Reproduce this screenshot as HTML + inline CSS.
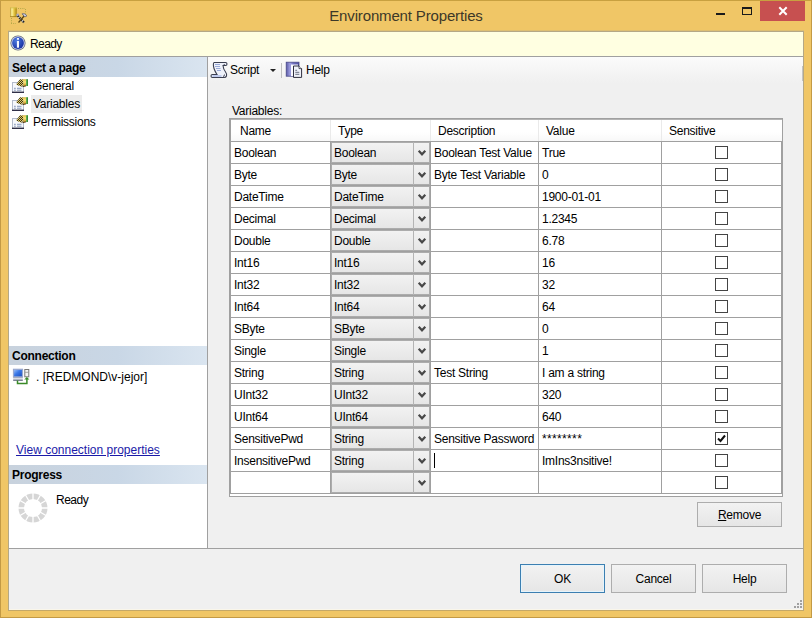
<!DOCTYPE html>
<html><head><meta charset="utf-8">
<style>
*{margin:0;padding:0;box-sizing:border-box}
html,body{width:812px;height:618px;overflow:hidden}
body{position:relative;background:#F0C666;font-family:"Liberation Sans",sans-serif;font-size:12px;color:#000}
.a{position:absolute}
.t{position:absolute;white-space:nowrap;line-height:14px;font-size:12px;letter-spacing:-0.25px}
.b{font-weight:bold}
#frame{left:0;top:0;width:812px;height:618px;border:1px solid #C39A45;border-top-color:#C8A040}
#title{left:0;width:812px;top:7px;text-align:center;font-size:15px;line-height:18px;color:#3d3828;letter-spacing:-0.15px}
#client{left:8px;top:31px;width:796px;height:580px;border:1px solid #B4A886;border-bottom-color:#C4A868;background:#F0F0F0}
#info{left:9px;top:32px;width:794px;height:25px;background:#FFFFE1;border-bottom:1px solid #A0A0A0}
#leftp{left:9px;top:57px;width:199px;height:492px;background:#fff;border-right:1px solid #A0A0A0;border-bottom:1px solid #A0A0A0}
#rightp{left:208px;top:57px;width:595px;height:492px;background:#F0F0F0;border-bottom:1px solid #A0A0A0}
#tb{left:208px;top:57px;width:595px;height:26px;background:linear-gradient(#FBFBFB,#F0F0F0)}
.hdr{position:absolute;left:9px;width:198px;height:19px;background:linear-gradient(to right,#C8D2DD,#C9D7E6 55%,#DAE5F0)}
#grid{left:229px;top:118px;width:554px;height:379px;border:1px solid #A0A0A0;background:#fff}
.hl{position:absolute;height:1px;background:#A0A0A0}
.vl{position:absolute;width:1px;background:#A0A0A0}
.cb{position:absolute;width:13px;height:13px;border:1px solid #444;background:#fff}
.combo{position:absolute;left:331px;width:99px;height:21px;border:1px solid #ACACAC;background:linear-gradient(#F2F2F2,#E6E6E6)}
.dd{position:absolute;left:413px;width:1px;height:21px;background:#B4B4B4}
.btn{position:absolute;border:1px solid #ADADAD;background:linear-gradient(#F2F2F2,#E6E6E6);text-align:center}
</style></head><body>
<div id="frame" class="a"></div>
<!-- title icon -->
<svg class="a" style="left:8px;top:4px" width="20" height="20" viewBox="0 0 20 20">
  <defs><linearGradient id="cy" x1="0" x2="1"><stop offset="0" stop-color="#B89830"/><stop offset="0.25" stop-color="#FFF4A0"/><stop offset="0.6" stop-color="#E4C440"/><stop offset="1" stop-color="#A88614"/></linearGradient></defs>
  <path d="M2.2 3.5h6.6v9.5h-6.6z" fill="url(#cy)"/>
  <path d="M2.2 3.8h6.6" stroke="#D8C050" stroke-width="1"/>
  <path d="M2.2 12.6h6.6" stroke="#9A7A18" stroke-width="0.8"/>
  <path d="M10 4.5h7M17.5 5v5M3.5 14v5M3 19.5h5" stroke="#B4A848" stroke-width="1" stroke-dasharray="1 1.2"/>
  <path d="M9 11 L16 18.5" stroke="#222" stroke-width="2"/>
  <path d="M9 11 L16 18.5" stroke="#E8E8E8" stroke-width="2" stroke-dasharray="1 1.5"/>
  <path d="M17 11 L10.5 18.5" stroke="#5a4410" stroke-width="1.3"/>
  <path d="M14 9.8 q3 -1 5 2 l-2.2 1.2z" fill="#C8CCE0" stroke="#556" stroke-width="0.7"/>
  <path d="M8.2 10.6 q1.2 -1.8 3.2 -0.4 l-1.6 2z" fill="#A8A8C0"/>
</svg>
<div id="title" class="a">Environment Properties</div>
<!-- min max close -->
<div class="a" style="left:716px;top:13px;width:9px;height:2px;background:#1a1a1a"></div>
<div class="a" style="left:742px;top:7px;width:10px;height:8px;border:1px solid #1a1a1a;border-top-width:2px"></div>
<div class="a" style="left:760px;top:1px;width:45px;height:20px;background:#C75050"></div>
<svg class="a" style="left:778px;top:6px" width="10" height="10" viewBox="0 0 10 10"><path d="M1.3 1.3L8.7 8.7M8.7 1.3L1.3 8.7" stroke="#fff" stroke-width="2"/></svg>

<div class="a" style="left:8px;top:30px;width:796px;height:1px;background:#DDBE72"></div>
<div id="client" class="a"></div>
<div class="a" style="left:9px;top:609px;width:794px;height:1px;background:#FAF6EA"></div>
<div id="info" class="a"></div>
<svg class="a" style="left:10px;top:35px" width="16" height="16" viewBox="0 0 16 16">
  <defs><radialGradient id="ig" cx="0.35" cy="0.3" r="0.75"><stop offset="0" stop-color="#4A78E0"/><stop offset="1" stop-color="#1A32A0"/></radialGradient></defs>
  <circle cx="8" cy="8" r="7.6" fill="#646A7A"/>
  <circle cx="8" cy="8" r="6.8" fill="#CDD4F0"/>
  <circle cx="8" cy="8" r="5.9" fill="url(#ig)"/>
  <rect x="6.9" y="3" width="2.1" height="1.8" fill="#E8F4FF"/>
  <rect x="6.9" y="5.9" width="2.1" height="6.8" fill="#F4F6FF"/>
</svg>
<div class="t" style="left:30px;top:37px;letter-spacing:-0.6px">Ready</div>

<div id="leftp" class="a"></div>
<div id="rightp" class="a"></div>
<div id="tb" class="a"></div>
<div class="a" style="left:802px;top:66px;width:1px;height:15px;background:#C4C4C4"></div>

<!-- left panel -->
<div class="hdr" style="top:57px;height:20px"></div>
<div class="t b" style="left:12px;top:61px">Select a page</div>
<div class="a" style="left:31px;top:95px;width:51px;height:18px;background:#ECECEC"></div>
<div class="t" style="left:33px;top:79px">General</div>
<div class="t" style="left:33px;top:97px">Variables</div>
<div class="t" style="left:33px;top:115px">Permissions</div>

<div class="hdr" style="top:346px"></div>
<div class="t b" style="left:12px;top:349px">Connection</div>
<div class="t" style="left:36px;top:370px;letter-spacing:0">. [REDMOND\v-jejor]</div>
<div class="t" style="left:16px;top:443px;color:#1A1AA8;text-decoration:underline;letter-spacing:0">View connection properties</div>

<div class="hdr" style="top:465px"></div>
<div class="t b" style="left:12px;top:468px">Progress</div>
<div class="t" style="left:56px;top:493px;letter-spacing:-0.5px">Ready</div>


<!-- page icons -->
<svg class="a" style="left:11px;top:78px" width="18" height="16" viewBox="0 0 18 16" id="pgicon">
  <defs>
   <linearGradient id="pen" x1="0" y1="0" x2="0" y2="1"><stop offset="0" stop-color="#D8B840"/><stop offset="0.4" stop-color="#FCE680"/><stop offset="1" stop-color="#C89010"/></linearGradient>
   <linearGradient id="grn" x1="0" y1="0" x2="1" y2="0"><stop offset="0" stop-color="#70C060"/><stop offset="1" stop-color="#287828"/></linearGradient>
   <pattern id="chk" width="2" height="2" patternUnits="userSpaceOnUse"><rect width="2" height="2" fill="#E0C868"/><rect width="1" height="1" fill="#3A3414"/><rect x="1" y="1" width="1" height="1" fill="#3A3414"/></pattern>
  </defs>
  <rect x="1.5" y="4.5" width="11" height="10" fill="#F6F8FC" stroke="#B4BCCC" stroke-width="1"/>
  <path d="M1 14.3h12" stroke="#303048" stroke-width="1.4"/>
  <path d="M3 10.3h1.8M6 10.3h4.5M3 12.2h1.8M6 12.2h4.5" stroke="#8898B8" stroke-width="1"/>
  <path d="M5.1 6.5 L9 1.2 L12 1.4 L12.6 6.6 L10.3 8.8 Z" fill="url(#chk)"/>
  <path d="M11.6 1.3 H15.2 V7.6 L12.2 8.3 Q12.8 4.5 11.6 1.3Z" fill="url(#pen)"/>
  <path d="M11.5 8.6 L15.2 7.8" stroke="#4A3008" stroke-width="1"/>
  <rect x="15" y="1.2" width="2" height="6.8" fill="url(#grn)"/>
</svg>
<svg class="a" style="left:11px;top:96px" width="18" height="16" viewBox="0 0 18 16"><use href="#pgicon"/></svg>
<svg class="a" style="left:11px;top:114px" width="18" height="16" viewBox="0 0 18 16"><use href="#pgicon"/></svg>

<!-- script icon -->
<svg class="a" style="left:210px;top:61px" width="18" height="18" viewBox="0 0 18 18">
  <path d="M4.2 1.5 H15.5 Q17 1.5 17 3 Q17 4.5 15.5 4.5 H13 Q13.3 8 15.3 10.5 Q17 12.8 16.5 15 Q16 16.5 14 16.5 H2.5 Q1 16.5 1 15 Q1 13.5 2.5 13.5 H7 Q5 10.5 4 7.5 Q3.2 5 3.4 3 Q3.6 1.5 4.2 1.5 Z" fill="#EEF1FA" stroke="#3A3E50" stroke-width="1.1"/>
  <path d="M5 3.5h5M5 5.5h5M6 7.5h4.5M7 9.5h4" stroke="#9AAAD8" stroke-width="1"/>
  <path d="M2.5 15h9" stroke="#B4C2EC" stroke-width="1.6"/>
  <path d="M15.5 4.5 Q14 4.5 14 3" fill="none" stroke="#3A3E50" stroke-width="0.9"/>
  <path d="M13 15.5 Q14.5 15.5 14.5 13.5" fill="none" stroke="#3A3E50" stroke-width="0.9"/>
</svg>
<!-- help icon -->
<svg class="a" style="left:285px;top:61px" width="18" height="18" viewBox="0 0 18 18">
  <defs><linearGradient id="bk" x1="0" x2="1"><stop offset="0" stop-color="#5A5AA8"/><stop offset="0.3" stop-color="#A0A0E0"/><stop offset="0.55" stop-color="#7070C0"/><stop offset="1" stop-color="#5050A0"/></linearGradient></defs>
  <rect x="1.2" y="1.2" width="12.8" height="14" fill="url(#bk)" stroke="#4A4A88" stroke-width="0.8"/>
  <rect x="6" y="3.5" width="7" height="11.5" fill="#FAFAFF"/>
  <path d="M8.5 5 H14 L16.6 7.6 V16.4 H8.5 Z" fill="#F0F2FA" stroke="#2E2E3E" stroke-width="1"/>
  <path d="M14 5 V7.6 H16.6" fill="#FFF" stroke="#2E2E3E" stroke-width="0.8"/>
  <path d="M10.3 9.3h1.8M10.3 11.3h4M10.3 13.3h4" stroke="#6A7080" stroke-width="1"/>
</svg>
<!-- connection icon -->
<svg class="a" style="left:12px;top:368px" width="18" height="18" viewBox="0 0 18 18">
  <defs><linearGradient id="scr" x1="0" y1="0" x2="1" y2="1"><stop offset="0" stop-color="#A8C8F8"/><stop offset="0.45" stop-color="#3A78E8"/><stop offset="1" stop-color="#1848B8"/></linearGradient></defs>
  <rect x="1.5" y="1.3" width="9" height="7.6" fill="url(#scr)" stroke="#98A8D0" stroke-width="1.2"/>
  <rect x="1.2" y="9.3" width="9.6" height="3.2" fill="#E0E4EC"/>
  <path d="M1.2 12.2h9.6" stroke="#485068" stroke-width="1"/>
  <path d="M1.2 9.6h9.6" stroke="#8890A8" stroke-width="0.7"/>
  <rect x="12.8" y="1.5" width="4" height="7.3" fill="#F4F4F4" stroke="#787878" stroke-width="1"/>
  <path d="M13 4.3h3.6" stroke="#909090" stroke-width="0.8"/>
  <path d="M5.5 12.6 V15.4 H14.9 V10.6" fill="none" stroke="#3A8A28" stroke-width="1.5"/>
  <path d="M12.2 11.6 L14.9 9 L17.4 11.6 Z" fill="#3A8A28"/>
</svg>
<!-- spinner -->
<svg class="a" style="left:18px;top:493px" width="30" height="30" viewBox="0 0 30 30">
  <circle cx="15" cy="15" r="11.8" fill="none" stroke="#D6D6D6" stroke-width="5.4"/>
  <g stroke="#fff" stroke-width="1.3">
    <path d="M15 0V30M0 15H30"/>
    <path d="M15 15L28 7.5M15 15L2 22.5M15 15L28 22.5M15 15L2 7.5M15 15L7.5 2M15 15L22.5 28M15 15L22.5 2M15 15L7.5 28"/>
  </g>
</svg>

<!-- size grip -->
<div class="a" style="left:800px;top:600px;width:2px;height:2px;background:#A0A0A0"></div>
<div class="a" style="left:797px;top:603px;width:2px;height:2px;background:#A0A0A0"></div>
<div class="a" style="left:800px;top:603px;width:2px;height:2px;background:#A0A0A0"></div>
<div class="a" style="left:794px;top:606px;width:2px;height:2px;background:#A0A0A0"></div>
<div class="a" style="left:797px;top:606px;width:2px;height:2px;background:#A0A0A0"></div>
<div class="a" style="left:800px;top:606px;width:2px;height:2px;background:#A0A0A0"></div>

<!-- toolbar -->
<div class="t" style="left:230px;top:63px">Script</div>
<div class="a" style="left:270px;top:69px;width:0;height:0;border-left:3px solid transparent;border-right:3px solid transparent;border-top:3px solid #222"></div>
<div class="a" style="left:281px;top:63px;width:1px;height:15px;background:#C0C0C0"></div>
<div class="t" style="left:306px;top:63px">Help</div>

<div class="t" style="left:232px;top:104px">Variables:</div>

<!-- grid -->
<div id="grid" class="a"></div>
<div class="a" style="left:230px;top:119px;width:552px;height:22px;background:linear-gradient(#fff,#fff 60%,#F8F8F8)"></div>
<div class="hl" style="left:230px;top:119px;width:552px;background:#B4B4B4"></div>
<div class="a" style="left:330px;top:120px;width:1px;height:21px;background:#EAEAEA"></div>
<div class="a" style="left:430px;top:120px;width:1px;height:21px;background:#EAEAEA"></div>
<div class="a" style="left:538px;top:120px;width:1px;height:21px;background:#EAEAEA"></div>
<div class="a" style="left:661px;top:120px;width:1px;height:21px;background:#EAEAEA"></div>
<div class="hl" style="left:230px;top:141px;width:552px"></div>
<div class="t" style="left:240px;top:124px">Name</div>
<div class="t" style="left:338px;top:124px">Type</div>
<div class="t" style="left:438px;top:124px">Description</div>
<div class="t" style="left:546px;top:124px">Value</div>
<div class="t" style="left:669px;top:124px">Sensitive</div>
<div class="vl" style="left:230px;top:119px;height:375px"></div>
<div class="vl" style="left:781px;top:141px;height:353px"></div>
<div class="hl" style="left:230px;top:163px;width:552px"></div>
<div class="vl" style="left:330px;top:142px;height:21px"></div>
<div class="vl" style="left:430px;top:142px;height:21px"></div>
<div class="vl" style="left:538px;top:142px;height:21px"></div>
<div class="vl" style="left:661px;top:142px;height:21px"></div>
<div class="t" style="left:234px;top:146px">Boolean</div>
<div class="combo" style="top:142px"></div>
<div class="dd" style="top:142px"></div>
<svg class="a" style="left:417px;top:149px" width="10" height="9" viewBox="0 0 10 9"><path d="M1.7 1.8L5 5.3L8.3 1.8" fill="none" stroke="#484848" stroke-width="2.2"/></svg>
<div class="t" style="left:334px;top:146px">Boolean</div>
<div class="t" style="left:434px;top:146px">Boolean Test Value</div>
<div class="t" style="left:542px;top:146px">True</div>
<div class="cb" style="left:715px;top:146px"></div>
<div class="hl" style="left:230px;top:185px;width:552px"></div>
<div class="vl" style="left:330px;top:164px;height:21px"></div>
<div class="vl" style="left:430px;top:164px;height:21px"></div>
<div class="vl" style="left:538px;top:164px;height:21px"></div>
<div class="vl" style="left:661px;top:164px;height:21px"></div>
<div class="t" style="left:234px;top:168px">Byte</div>
<div class="combo" style="top:164px"></div>
<div class="dd" style="top:164px"></div>
<svg class="a" style="left:417px;top:171px" width="10" height="9" viewBox="0 0 10 9"><path d="M1.7 1.8L5 5.3L8.3 1.8" fill="none" stroke="#484848" stroke-width="2.2"/></svg>
<div class="t" style="left:334px;top:168px">Byte</div>
<div class="t" style="left:434px;top:168px">Byte Test Variable</div>
<div class="t" style="left:542px;top:168px">0</div>
<div class="cb" style="left:715px;top:168px"></div>
<div class="hl" style="left:230px;top:207px;width:552px"></div>
<div class="vl" style="left:330px;top:186px;height:21px"></div>
<div class="vl" style="left:430px;top:186px;height:21px"></div>
<div class="vl" style="left:538px;top:186px;height:21px"></div>
<div class="vl" style="left:661px;top:186px;height:21px"></div>
<div class="t" style="left:234px;top:190px">DateTime</div>
<div class="combo" style="top:186px"></div>
<div class="dd" style="top:186px"></div>
<svg class="a" style="left:417px;top:193px" width="10" height="9" viewBox="0 0 10 9"><path d="M1.7 1.8L5 5.3L8.3 1.8" fill="none" stroke="#484848" stroke-width="2.2"/></svg>
<div class="t" style="left:334px;top:190px">DateTime</div>
<div class="t" style="left:542px;top:190px">1900-01-01</div>
<div class="cb" style="left:715px;top:190px"></div>
<div class="hl" style="left:230px;top:229px;width:552px"></div>
<div class="vl" style="left:330px;top:208px;height:21px"></div>
<div class="vl" style="left:430px;top:208px;height:21px"></div>
<div class="vl" style="left:538px;top:208px;height:21px"></div>
<div class="vl" style="left:661px;top:208px;height:21px"></div>
<div class="t" style="left:234px;top:212px">Decimal</div>
<div class="combo" style="top:208px"></div>
<div class="dd" style="top:208px"></div>
<svg class="a" style="left:417px;top:215px" width="10" height="9" viewBox="0 0 10 9"><path d="M1.7 1.8L5 5.3L8.3 1.8" fill="none" stroke="#484848" stroke-width="2.2"/></svg>
<div class="t" style="left:334px;top:212px">Decimal</div>
<div class="t" style="left:542px;top:212px">1.2345</div>
<div class="cb" style="left:715px;top:212px"></div>
<div class="hl" style="left:230px;top:251px;width:552px"></div>
<div class="vl" style="left:330px;top:230px;height:21px"></div>
<div class="vl" style="left:430px;top:230px;height:21px"></div>
<div class="vl" style="left:538px;top:230px;height:21px"></div>
<div class="vl" style="left:661px;top:230px;height:21px"></div>
<div class="t" style="left:234px;top:234px">Double</div>
<div class="combo" style="top:230px"></div>
<div class="dd" style="top:230px"></div>
<svg class="a" style="left:417px;top:237px" width="10" height="9" viewBox="0 0 10 9"><path d="M1.7 1.8L5 5.3L8.3 1.8" fill="none" stroke="#484848" stroke-width="2.2"/></svg>
<div class="t" style="left:334px;top:234px">Double</div>
<div class="t" style="left:542px;top:234px">6.78</div>
<div class="cb" style="left:715px;top:234px"></div>
<div class="hl" style="left:230px;top:273px;width:552px"></div>
<div class="vl" style="left:330px;top:252px;height:21px"></div>
<div class="vl" style="left:430px;top:252px;height:21px"></div>
<div class="vl" style="left:538px;top:252px;height:21px"></div>
<div class="vl" style="left:661px;top:252px;height:21px"></div>
<div class="t" style="left:234px;top:256px">Int16</div>
<div class="combo" style="top:252px"></div>
<div class="dd" style="top:252px"></div>
<svg class="a" style="left:417px;top:259px" width="10" height="9" viewBox="0 0 10 9"><path d="M1.7 1.8L5 5.3L8.3 1.8" fill="none" stroke="#484848" stroke-width="2.2"/></svg>
<div class="t" style="left:334px;top:256px">Int16</div>
<div class="t" style="left:542px;top:256px">16</div>
<div class="cb" style="left:715px;top:256px"></div>
<div class="hl" style="left:230px;top:295px;width:552px"></div>
<div class="vl" style="left:330px;top:274px;height:21px"></div>
<div class="vl" style="left:430px;top:274px;height:21px"></div>
<div class="vl" style="left:538px;top:274px;height:21px"></div>
<div class="vl" style="left:661px;top:274px;height:21px"></div>
<div class="t" style="left:234px;top:278px">Int32</div>
<div class="combo" style="top:274px"></div>
<div class="dd" style="top:274px"></div>
<svg class="a" style="left:417px;top:281px" width="10" height="9" viewBox="0 0 10 9"><path d="M1.7 1.8L5 5.3L8.3 1.8" fill="none" stroke="#484848" stroke-width="2.2"/></svg>
<div class="t" style="left:334px;top:278px">Int32</div>
<div class="t" style="left:542px;top:278px">32</div>
<div class="cb" style="left:715px;top:278px"></div>
<div class="hl" style="left:230px;top:317px;width:552px"></div>
<div class="vl" style="left:330px;top:296px;height:21px"></div>
<div class="vl" style="left:430px;top:296px;height:21px"></div>
<div class="vl" style="left:538px;top:296px;height:21px"></div>
<div class="vl" style="left:661px;top:296px;height:21px"></div>
<div class="t" style="left:234px;top:300px">Int64</div>
<div class="combo" style="top:296px"></div>
<div class="dd" style="top:296px"></div>
<svg class="a" style="left:417px;top:303px" width="10" height="9" viewBox="0 0 10 9"><path d="M1.7 1.8L5 5.3L8.3 1.8" fill="none" stroke="#484848" stroke-width="2.2"/></svg>
<div class="t" style="left:334px;top:300px">Int64</div>
<div class="t" style="left:542px;top:300px">64</div>
<div class="cb" style="left:715px;top:300px"></div>
<div class="hl" style="left:230px;top:339px;width:552px"></div>
<div class="vl" style="left:330px;top:318px;height:21px"></div>
<div class="vl" style="left:430px;top:318px;height:21px"></div>
<div class="vl" style="left:538px;top:318px;height:21px"></div>
<div class="vl" style="left:661px;top:318px;height:21px"></div>
<div class="t" style="left:234px;top:322px">SByte</div>
<div class="combo" style="top:318px"></div>
<div class="dd" style="top:318px"></div>
<svg class="a" style="left:417px;top:325px" width="10" height="9" viewBox="0 0 10 9"><path d="M1.7 1.8L5 5.3L8.3 1.8" fill="none" stroke="#484848" stroke-width="2.2"/></svg>
<div class="t" style="left:334px;top:322px">SByte</div>
<div class="t" style="left:542px;top:322px">0</div>
<div class="cb" style="left:715px;top:322px"></div>
<div class="hl" style="left:230px;top:361px;width:552px"></div>
<div class="vl" style="left:330px;top:340px;height:21px"></div>
<div class="vl" style="left:430px;top:340px;height:21px"></div>
<div class="vl" style="left:538px;top:340px;height:21px"></div>
<div class="vl" style="left:661px;top:340px;height:21px"></div>
<div class="t" style="left:234px;top:344px">Single</div>
<div class="combo" style="top:340px"></div>
<div class="dd" style="top:340px"></div>
<svg class="a" style="left:417px;top:347px" width="10" height="9" viewBox="0 0 10 9"><path d="M1.7 1.8L5 5.3L8.3 1.8" fill="none" stroke="#484848" stroke-width="2.2"/></svg>
<div class="t" style="left:334px;top:344px">Single</div>
<div class="t" style="left:542px;top:344px">1</div>
<div class="cb" style="left:715px;top:344px"></div>
<div class="hl" style="left:230px;top:383px;width:552px"></div>
<div class="vl" style="left:330px;top:362px;height:21px"></div>
<div class="vl" style="left:430px;top:362px;height:21px"></div>
<div class="vl" style="left:538px;top:362px;height:21px"></div>
<div class="vl" style="left:661px;top:362px;height:21px"></div>
<div class="t" style="left:234px;top:366px">String</div>
<div class="combo" style="top:362px"></div>
<div class="dd" style="top:362px"></div>
<svg class="a" style="left:417px;top:369px" width="10" height="9" viewBox="0 0 10 9"><path d="M1.7 1.8L5 5.3L8.3 1.8" fill="none" stroke="#484848" stroke-width="2.2"/></svg>
<div class="t" style="left:334px;top:366px">String</div>
<div class="t" style="left:434px;top:366px">Test String</div>
<div class="t" style="left:542px;top:366px">I am a string</div>
<div class="cb" style="left:715px;top:366px"></div>
<div class="hl" style="left:230px;top:405px;width:552px"></div>
<div class="vl" style="left:330px;top:384px;height:21px"></div>
<div class="vl" style="left:430px;top:384px;height:21px"></div>
<div class="vl" style="left:538px;top:384px;height:21px"></div>
<div class="vl" style="left:661px;top:384px;height:21px"></div>
<div class="t" style="left:234px;top:388px">UInt32</div>
<div class="combo" style="top:384px"></div>
<div class="dd" style="top:384px"></div>
<svg class="a" style="left:417px;top:391px" width="10" height="9" viewBox="0 0 10 9"><path d="M1.7 1.8L5 5.3L8.3 1.8" fill="none" stroke="#484848" stroke-width="2.2"/></svg>
<div class="t" style="left:334px;top:388px">UInt32</div>
<div class="t" style="left:542px;top:388px">320</div>
<div class="cb" style="left:715px;top:388px"></div>
<div class="hl" style="left:230px;top:427px;width:552px"></div>
<div class="vl" style="left:330px;top:406px;height:21px"></div>
<div class="vl" style="left:430px;top:406px;height:21px"></div>
<div class="vl" style="left:538px;top:406px;height:21px"></div>
<div class="vl" style="left:661px;top:406px;height:21px"></div>
<div class="t" style="left:234px;top:410px">UInt64</div>
<div class="combo" style="top:406px"></div>
<div class="dd" style="top:406px"></div>
<svg class="a" style="left:417px;top:413px" width="10" height="9" viewBox="0 0 10 9"><path d="M1.7 1.8L5 5.3L8.3 1.8" fill="none" stroke="#484848" stroke-width="2.2"/></svg>
<div class="t" style="left:334px;top:410px">UInt64</div>
<div class="t" style="left:542px;top:410px">640</div>
<div class="cb" style="left:715px;top:410px"></div>
<div class="hl" style="left:230px;top:449px;width:552px"></div>
<div class="vl" style="left:330px;top:428px;height:21px"></div>
<div class="vl" style="left:430px;top:428px;height:21px"></div>
<div class="vl" style="left:538px;top:428px;height:21px"></div>
<div class="vl" style="left:661px;top:428px;height:21px"></div>
<div class="t" style="left:234px;top:432px">SensitivePwd</div>
<div class="combo" style="top:428px"></div>
<div class="dd" style="top:428px"></div>
<svg class="a" style="left:417px;top:435px" width="10" height="9" viewBox="0 0 10 9"><path d="M1.7 1.8L5 5.3L8.3 1.8" fill="none" stroke="#484848" stroke-width="2.2"/></svg>
<div class="t" style="left:334px;top:432px">String</div>
<div class="t" style="left:434px;top:432px">Sensitive Password</div>
<div class="t" style="left:542px;top:432px;letter-spacing:0.35px">********</div>
<div class="cb" style="left:715px;top:432px"></div>
<svg class="a" style="left:715px;top:432px" width="13" height="13" viewBox="0 0 13 13"><path d="M3 6.5L5.5 9L10 3.5" fill="none" stroke="#111" stroke-width="2"/></svg>
<div class="hl" style="left:230px;top:471px;width:552px"></div>
<div class="vl" style="left:330px;top:450px;height:21px"></div>
<div class="vl" style="left:430px;top:450px;height:21px"></div>
<div class="vl" style="left:538px;top:450px;height:21px"></div>
<div class="vl" style="left:661px;top:450px;height:21px"></div>
<div class="t" style="left:234px;top:454px">InsensitivePwd</div>
<div class="combo" style="top:450px"></div>
<div class="dd" style="top:450px"></div>
<svg class="a" style="left:417px;top:457px" width="10" height="9" viewBox="0 0 10 9"><path d="M1.7 1.8L5 5.3L8.3 1.8" fill="none" stroke="#484848" stroke-width="2.2"/></svg>
<div class="t" style="left:334px;top:454px">String</div>
<div class="t" style="left:542px;top:454px">ImIns3nsitive!</div>
<div class="cb" style="left:715px;top:454px"></div>
<div class="hl" style="left:230px;top:493px;width:552px"></div>
<div class="vl" style="left:330px;top:472px;height:21px"></div>
<div class="vl" style="left:430px;top:472px;height:21px"></div>
<div class="vl" style="left:538px;top:472px;height:21px"></div>
<div class="vl" style="left:661px;top:472px;height:21px"></div>
<div class="combo" style="top:472px"></div>
<div class="dd" style="top:472px"></div>
<svg class="a" style="left:417px;top:479px" width="10" height="9" viewBox="0 0 10 9"><path d="M1.7 1.8L5 5.3L8.3 1.8" fill="none" stroke="#484848" stroke-width="2.2"/></svg>
<div class="cb" style="left:715px;top:476px"></div>
<div class="a" style="left:434px;top:453px;width:1px;height:15px;background:#000"></div>
<div class="btn" style="left:697px;top:502px;width:85px;height:25px"></div>
<div class="t" style="left:697px;width:85px;text-align:center;top:508px"><u>R</u>emove</div>
<div class="btn" style="left:520px;top:564px;width:85px;height:29px;border-color:#3C7FB1;box-shadow:inset 0 0 0 1px #E5F4FC"></div>
<div class="t" style="left:520px;width:85px;text-align:center;top:572px">OK</div>
<div class="btn" style="left:611px;top:564px;width:85px;height:29px"></div>
<div class="t" style="left:611px;width:85px;text-align:center;top:572px">Cancel</div>
<div class="btn" style="left:702px;top:564px;width:85px;height:29px"></div>
<div class="t" style="left:702px;width:85px;text-align:center;top:572px">Help</div>
</body></html>
